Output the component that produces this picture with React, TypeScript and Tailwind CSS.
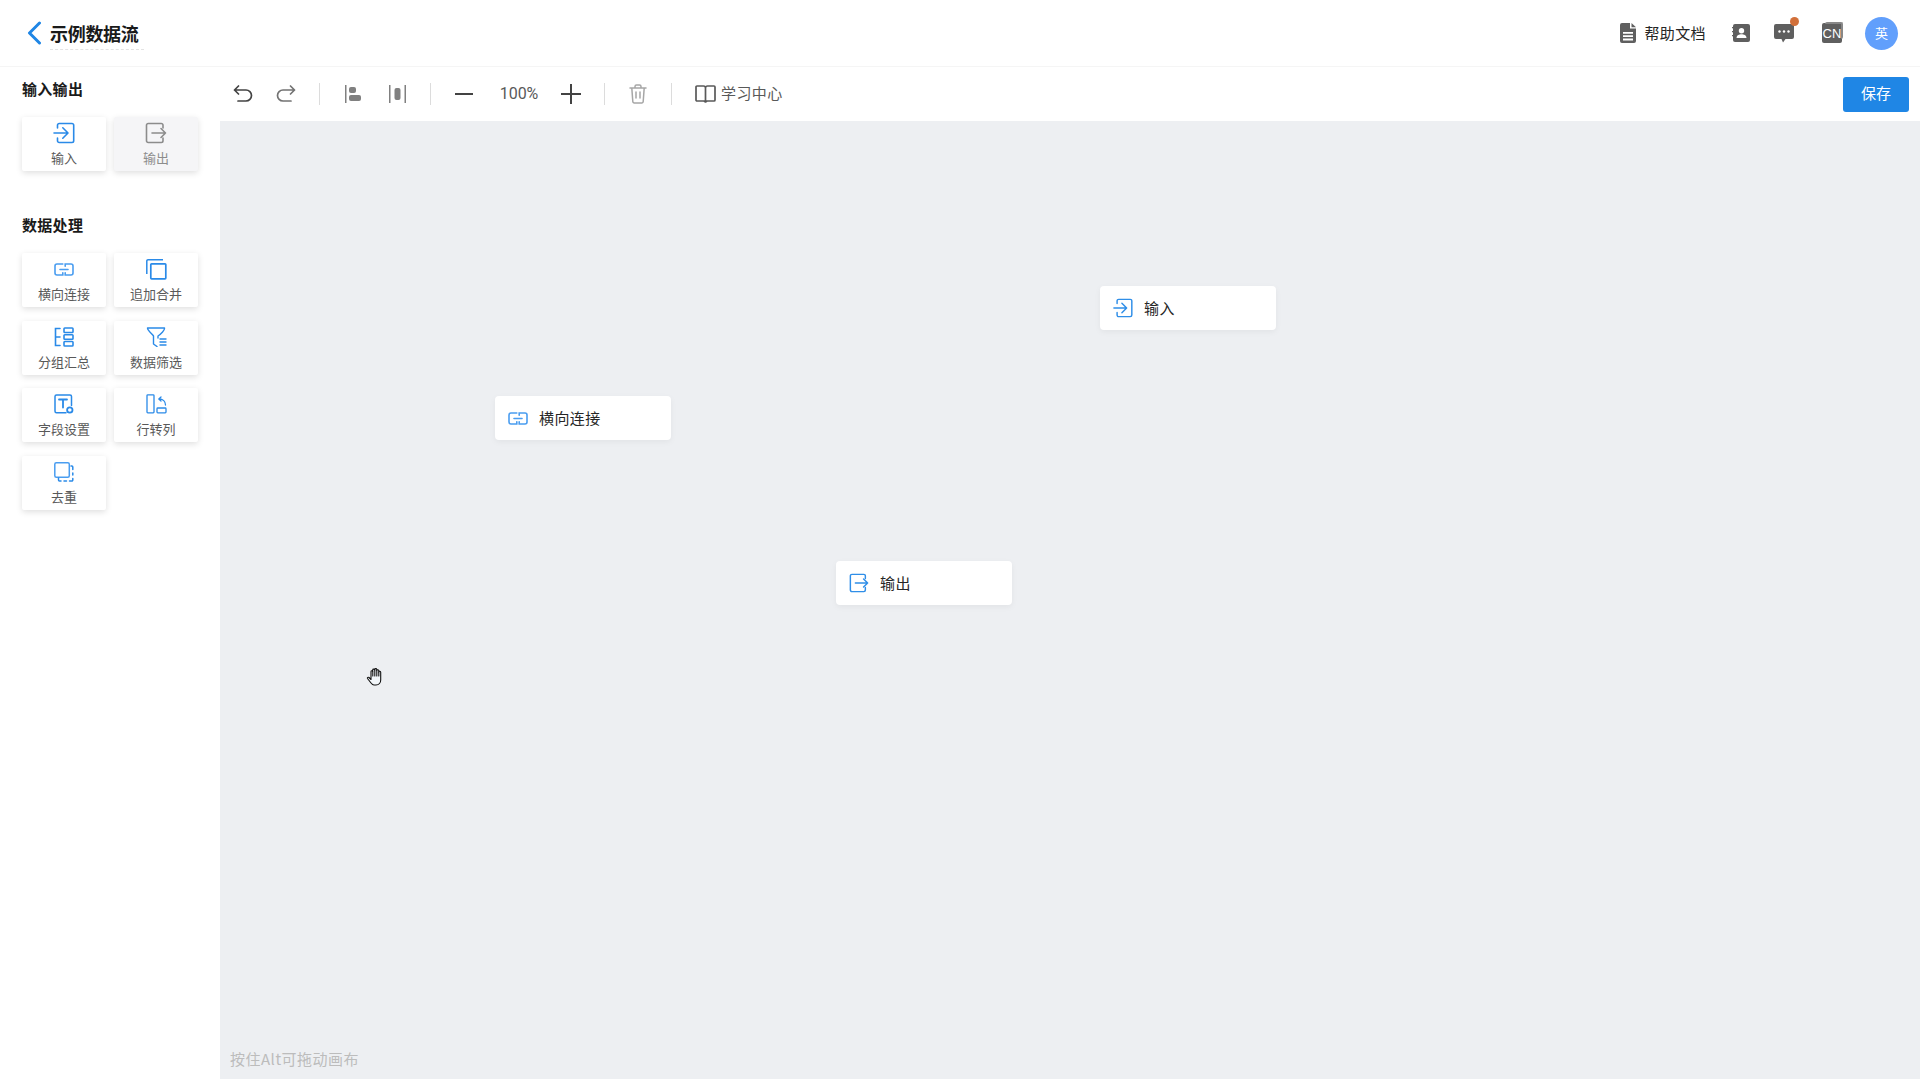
import React from "react";

const font = { fontFamily: '"Noto Sans CJK SC", sans-serif' };

type IP = { className?: string };

const InputIcon = ({ className }: IP) => (
  <svg viewBox="0 0 22 22" className={className} fill="none" stroke="currentColor" strokeWidth="1.600" strokeLinecap="round" strokeLinejoin="round">
    <path d="M4.500 6V3.200A1.700 1.700 0 0 1 6.200 1.500H19A1.700 1.700 0 0 1 20.700 3.200V18.800A1.700 1.700 0 0 1 19 20.500H6.200A1.700 1.700 0 0 1 4.500 18.800V16" />
    <path d="M1 11H14.500M9.800 5.800L15 11L9.800 16.200" />
  </svg>
);
const OutputIcon = ({ className }: IP) => (
  <svg viewBox="0 0 22 22" className={className} fill="none" stroke="currentColor" strokeWidth="1.600" strokeLinecap="round" strokeLinejoin="round">
    <path d="M18 6V3.200A1.700 1.700 0 0 0 16.300 1.500H3.200A1.700 1.700 0 0 0 1.500 3.200V18.800A1.700 1.700 0 0 0 3.200 20.500H16.300A1.700 1.700 0 0 0 18 18.800V16" />
    <path d="M7 11H20.500M16 6.500L20.500 11L16 15.500" />
  </svg>
);
const JoinIcon = ({ className }: IP) => (
  <svg viewBox="0 0 20 13" className={className} fill="none" stroke="#4a9df0" strokeWidth="1.600" strokeLinecap="round">
    <path d="M8.800 1H3A2 2 0 0 0 1 3V10A2 2 0 0 0 3 12H8.800V9.800" />
    <path d="M11.200 9.800V12H17A2 2 0 0 0 19 10V3A2 2 0 0 0 17 1H11.200V3.200" />
    <path d="M6 6.500H14" />
  </svg>
);
const AppendIcon = ({ className }: IP) => (
  <svg viewBox="0 0 21 21" className={className} fill="none" stroke="currentColor" strokeWidth="1.500">
    <path d="M0.800 15V2A1.200 1.200 0 0 1 2 0.800H17" />
    <rect x="4.800" y="4.800" width="15" height="15" rx="0.800" strokeWidth="1.700" />
  </svg>
);
const GroupIcon = ({ className }: IP) => (
  <svg viewBox="0 0 20 20" className={className} fill="none" stroke="currentColor" strokeWidth="1.600" strokeLinecap="round">
    <path d="M6 1.500H1.500V18.500H6M1.500 10H6" />
    <rect x="10" y="1" width="9" height="4.500" rx="0.800" />
    <rect x="10" y="7.800" width="9" height="4.500" rx="0.800" />
    <rect x="10" y="14.500" width="9" height="4.500" rx="0.800" />
  </svg>
);
const FilterIcon = ({ className }: IP) => (
  <svg viewBox="0 0 21 20" className={className} fill="none" stroke="currentColor" strokeWidth="1.400" strokeLinecap="round" strokeLinejoin="round">
    <path d="M1.500 1H18.500C19 3 15 7 12 9V11M1.500 1C1.500 3.500 6 7 7.500 9V17L11 19.500" />
    <path d="M14 12H20M14 15H20M14 18H20" />
  </svg>
);
const FieldIcon = ({ className }: IP) => (
  <svg viewBox="0 0 20 20" className={className} fill="none" stroke="currentColor" strokeWidth="1.500" strokeLinecap="round">
    <path d="M12 18.700H2.500A1.500 1.500 0 0 1 1 17.200V2.500A1.500 1.500 0 0 1 2.500 1H16A1.500 1.500 0 0 1 17.500 2.500V11.500" />
    <path d="M5 5.500H13M9 5.500V13.500" strokeWidth="1.800" />
    <circle cx="15.800" cy="16" r="2.700" strokeWidth="1.800" />
  </svg>
);
const PivotIcon = ({ className }: IP) => (
  <svg viewBox="0 0 21 20" className={className} fill="none" stroke="currentColor" strokeWidth="1.300" strokeLinecap="round" strokeLinejoin="round">
    <rect x="1" y="0.800" width="7" height="18" rx="0.800" />
    <rect x="11" y="14" width="9" height="4.800" rx="0.800" />
    <path d="M19.500 11C19.500 7.500 17 5 13 5M15 3L12.800 5L15 7" />
  </svg>
);
const DedupeIcon = ({ className }: IP) => (
  <svg viewBox="0 0 20 20" className={className} fill="none" stroke="currentColor" strokeWidth="1.500" strokeLinecap="round">
    <rect x="0.800" y="0.800" width="14.500" height="14.500" rx="1.500" stroke="#4a9df0" />
    <path d="M4.500 16V18A1 1 0 0 0 5.500 19H7M10 19H12.500M15.500 19H17.500A1 1 0 0 0 18.800 18V16.500M18.800 13V11M18.800 7.500V5A1 1 0 0 0 17.800 4H17" />
  </svg>
);

const Card = ({ label, icon, muted }: { label: string; icon: React.ReactNode; muted?: boolean }) => (
  <div className={`flex h-[54px] w-[84px] flex-col items-center rounded-[2px] pt-[5px] shadow-[0_2px_6px_rgba(0,0,0,0.13)] ${muted ? "bg-[#f5f5f7] text-[#8c8c8c]" : "bg-white text-[#2a8ae8]"}`}>
    <div className="flex h-[22px] items-center justify-center">{icon}</div>
    <span className={`mt-[5px] text-[13px] leading-[18px] ${muted ? "text-[#8c8c8c]" : "text-[#595959]"}`}>{label}</span>
  </div>
);

const Node = ({ label, icon, className }: { label: string; icon: React.ReactNode; className: string }) => (
  <div className={`absolute flex h-[44px] w-[176px] items-center rounded-[4px] bg-white pl-[12px] text-[15px] tracking-[0.4px] text-[#262626] shadow-[0_2px_6px_rgba(0,0,0,0.05)] ${className}`}>
    <span className="flex w-[22px] justify-center text-[#2f8ee8]">{icon}</span>
    <span className="ml-[10px]">{label}</span>
  </div>
);

const Sep = () => <div className="h-[22px] w-px bg-[#dcdcdc]" />;

export default function App() {
  return (
    <div className="flex h-[1079px] w-[1920px] flex-col overflow-hidden bg-white" style={font}>
      <header className="flex h-[67px] shrink-0 items-center justify-between border-b border-[#f5f5f5] pl-[26px] pr-[22px]">
        <div className="flex items-center">
          <svg viewBox="0 0 16 24" className="h-[24px] w-[16px] text-[#1f86e5]" fill="none" stroke="currentColor" strokeWidth="3" strokeLinecap="round" strokeLinejoin="round">
            <path d="M13.500 2L3.500 12L13.500 22" />
          </svg>
          <div className="ml-[8px] flex h-[34px] w-[94px] items-center border-b border-dashed border-[#e3e3e3] text-[18px] font-bold leading-[24px] tracking-[-0.3px] text-[#1a1a1a]">示例数据流</div>
        </div>
        <div className="flex items-center text-[#5f5f5f]">
          <svg viewBox="0 0 16 20" className="h-[20px] w-[16px]" fill="currentColor">
            <path d="M2 0H10V5.500H16V18A2 2 0 0 1 14 20H2A2 2 0 0 1 0 18V2A2 2 0 0 1 2 0Z" />
            <path d="M11.500 0L16 4.200H11.500Z" />
            <path d="M3 9H13V10.800H3ZM3 12.300H13V14.100H3ZM3 15.600H13V17.400H3Z" fill="#fff" />
          </svg>
          <span className="ml-[8px] text-[15px] tracking-[0.4px] text-[#262626]">帮助文档</span>
          <svg viewBox="0 0 18 18" className="ml-[26px] h-[18px] w-[18px]" fill="currentColor">
            <rect x="1" y="0" width="17" height="18" rx="2" />
            <path d="M0 3H2.500V4.300H0ZM0 7H2.500V8.300H0ZM0 11H2.500V12.300H0Z" />
            <circle cx="9.500" cy="6.800" r="2.700" fill="#fff" />
            <path d="M4.500 14C4.800 11 7 10.300 9.500 10.300S14.200 11 14.500 14Z" fill="#fff" />
          </svg>
          <div className="relative ml-[24px] h-[19px] w-[20px]">
            <svg viewBox="0 0 20 19" className="h-[19px] w-[20px]" fill="currentColor">
              <path d="M2 0H18A2 2 0 0 1 20 2V13A2 2 0 0 1 18 15H11.500L9 18.500L7.500 15H2A2 2 0 0 1 0 13V2A2 2 0 0 1 2 0Z" />
              <circle cx="5.500" cy="7.500" r="1.200" fill="#fff" />
              <circle cx="10" cy="7.500" r="1.200" fill="#fff" />
              <circle cx="14.500" cy="7.500" r="1.200" fill="#fff" />
            </svg>
            <span className="absolute -right-[5px] -top-[7px] h-[9px] w-[9px] rounded-full bg-[#d2703a]" />
          </div>
          <div className="relative ml-[28px] flex h-[20px] w-[20px] items-center justify-center rounded-[2px] bg-[#5f5f5f] text-[13px] leading-none text-white">
            <span className="absolute -right-[1px] -top-[1px] h-[17px] w-[18px] rounded-[2px] border-r-2 border-t-2 border-[#888]" />
            <span style={{ fontFamily: '"Liberation Sans", sans-serif' }}>CN</span>
          </div>
          <div className="ml-[23px] flex h-[33px] w-[33px] items-center justify-center rounded-full bg-[#619ffc] text-[13px] text-white">英</div>
        </div>
      </header>
      <div className="flex min-h-0 flex-1">
        <aside className="flex w-[220px] shrink-0 flex-col pl-[22px]">
          <h3 className="mt-[11px] text-[15px] font-bold leading-[22px] tracking-[0.3px] text-[#1a1a1a]">输入输出</h3>
          <div className="mt-[17px] grid w-[176px] grid-cols-[84px_84px] gap-x-[8px]">
            <Card label="输入" icon={<InputIcon className="h-[22px] w-[22px]" />} />
            <Card label="输出" muted icon={<OutputIcon className="h-[22px] w-[22px]" />} />
          </div>
          <h3 className="mt-[43px] text-[15px] font-bold leading-[22px] tracking-[0.3px] text-[#1a1a1a]">数据处理</h3>
          <div className="mt-[17px] grid w-[176px] grid-cols-[84px_84px] gap-x-[8px] gap-y-[13.5px]">
            <Card label="横向连接" icon={<JoinIcon className="h-[13px] w-[20px]" />} />
            <Card label="追加合并" icon={<AppendIcon className="h-[21px] w-[21px]" />} />
            <Card label="分组汇总" icon={<GroupIcon className="h-[20px] w-[20px]" />} />
            <Card label="数据筛选" icon={<FilterIcon className="h-[20px] w-[21px]" />} />
            <Card label="字段设置" icon={<FieldIcon className="h-[20px] w-[20px]" />} />
            <Card label="行转列" icon={<PivotIcon className="h-[20px] w-[21px]" />} />
            <Card label="去重" icon={<DedupeIcon className="h-[20px] w-[20px]" />} />
          </div>
        </aside>
        <main className="flex min-w-0 flex-1 flex-col">
          <div className="flex h-[54px] shrink-0 items-center pl-[13px] pr-[11px] text-[#434343]">
            <svg viewBox="0 0 20 18" className="h-[18px] w-[20px]" fill="none" stroke="currentColor" strokeWidth="1.700" strokeLinecap="round" strokeLinejoin="round">
              <path d="M1.500 5H13A5.500 5.500 0 0 1 13 16H5M5.500 1L1.500 5L5.500 9" />
            </svg>
            <svg viewBox="0 0 20 18" className="ml-[23px] h-[18px] w-[20px] text-[#737373]" fill="none" stroke="currentColor" strokeWidth="1.700" strokeLinecap="round" strokeLinejoin="round">
              <path d="M18.500 5H7A5.500 5.500 0 0 0 7 16H15M14.500 1L18.500 5L14.500 9" />
            </svg>
            <div className="ml-[23px]"><Sep /></div>
            <svg viewBox="0 0 16 18" className="ml-[25px] h-[18px] w-[16px] text-[#808080]" fill="currentColor">
              <rect x="0" y="0" width="1.500" height="18" />
              <rect x="4" y="2" width="7" height="6" rx="2" />
              <rect x="4" y="10" width="12" height="6" rx="2" />
            </svg>
            <svg viewBox="0 0 17 18" className="ml-[28px] h-[18px] w-[17px] text-[#808080]" fill="currentColor">
              <rect x="0" y="0" width="1.500" height="18" />
              <rect x="15.500" y="0" width="1.500" height="18" />
              <rect x="5.500" y="3" width="6" height="12" rx="2" />
            </svg>
            <div className="ml-[24px]"><Sep /></div>
            <svg viewBox="0 0 18 18" className="ml-[24px] h-[18px] w-[18px] text-[#434343]" fill="none" stroke="currentColor" strokeWidth="2">
              <path d="M0 9H18" />
            </svg>
            <span className="ml-[26px] w-[40px] text-center text-[16px] leading-[20px] text-[#595959]" style={{ fontFamily: "Roboto, sans-serif" }}>100%</span>
            <svg viewBox="0 0 20 20" className="ml-[22px] h-[20px] w-[20px] text-[#434343]" fill="none" stroke="currentColor" strokeWidth="2">
              <path d="M0 10H20M10 0V20" />
            </svg>
            <div className="ml-[23px]"><Sep /></div>
            <svg viewBox="0 0 18 20" className="ml-[24px] h-[20px] w-[18px] text-[#a6a6a6]" fill="none" stroke="currentColor" strokeWidth="1.500" strokeLinecap="round" strokeLinejoin="round">
              <path d="M1 4H17M6 4V2.500A1.500 1.500 0 0 1 7.500 1H10.500A1.500 1.500 0 0 1 12 2.500V4M2.800 4L3.800 17.500A1.500 1.500 0 0 0 5.300 19H12.700A1.500 1.500 0 0 0 14.200 17.500L15.200 4M7 8V14M11 8V14" />
            </svg>
            <div className="ml-[24px]"><Sep /></div>
            <svg viewBox="0 0 21 18" className="ml-[23px] h-[18px] w-[21px] text-[#595959]" fill="none" stroke="currentColor" strokeWidth="1.700" strokeLinejoin="round">
              <path d="M10.500 3V17L9 16H2A1 1 0 0 1 1 15V2A1 1 0 0 1 2 1H8.500A2 2 0 0 1 10.500 3ZM10.500 3A2 2 0 0 1 12.500 1H19A1 1 0 0 1 20 2V15A1 1 0 0 1 19 16H12L10.500 17" />
            </svg>
            <span className="ml-[5px] pb-[1px] text-[15px] tracking-[0.4px] text-[#595959]">学习中心</span>
            <button className="ml-auto flex h-[35px] w-[66px] items-center justify-center rounded-[3px] bg-[#1f86e5] pb-[2px] text-[15px] text-white">保存</button>
          </div>
          <div className="relative min-h-0 flex-1 bg-[#edeff2]">
            <Node className="left-[880px] top-[165px]" label="输入" icon={<InputIcon className="h-[20px] w-[20px]" />} />
            <Node className="left-[275px] top-[275px]" label="横向连接" icon={<JoinIcon className="h-[13px] w-[20px]" />} />
            <Node className="left-[616px] top-[440px]" label="输出" icon={<OutputIcon className="h-[20px] w-[20px]" />} />
            <svg viewBox="0 0 20 20" className="absolute left-[146px] top-[546px] h-[20px] w-[20px]" fill="#f2f6fa" stroke="#111" strokeWidth="1.100" strokeLinejoin="round" strokeLinecap="round">
              <path d="M5 16L1.500 11.500C1 10.500 2.300 9.800 3 10.500L5 12.500V4.500C5 3.500 6.500 3.500 6.700 4.500V3C6.700 1.800 8.500 1.800 8.700 3V2.500C8.700 1.300 10.700 1.300 10.800 2.500V3.500C11 2.500 12.800 2.500 12.800 3.800V5C13 4 14.700 4 14.700 5.300V13C14.700 15.500 13 18 10 18H8C6.800 18 5.800 17 5 16Z" />
              <path d="M6.800 4.500V9M8.800 3V9M10.800 3.500V9M12.800 5V9" fill="none" />
            </svg>
            <span className="absolute bottom-[10px] left-[10px] text-[15px] leading-[20px] tracking-[0.5px] text-[#bcbcbc]">按住Alt可拖动画布</span>
          </div>
        </main>
      </div>
    </div>
  );
}
